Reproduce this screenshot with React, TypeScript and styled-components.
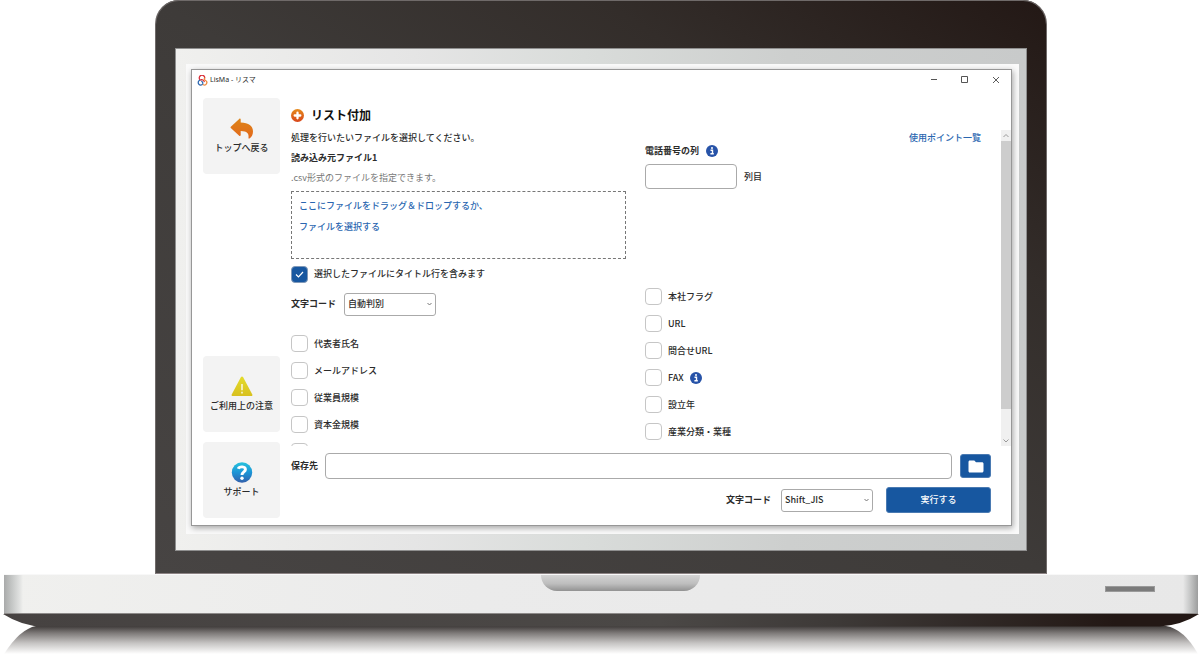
import React from "react";
import styled, { createGlobalStyle, css } from "styled-components";

const GlobalStyle = createGlobalStyle`
  *, *::before, *::after { box-sizing: border-box; }
  body {
    margin: 0;
    background: #fff;
    color: #2b2b2b;
    font: 500 9px/20px "Noto Sans CJK JP", "Noto Sans", sans-serif;
    overflow-x: hidden;
  }
  button, input, select { font: inherit; color: inherit; margin: 0; }
`;

const blue = "#1757a0";
const linkBlue = "#2a66b0";

/* ---------- laptop ---------- */
const Laptop = styled.div`
  display: flex;
  flex-direction: column;
`;
const Lid = styled.div`
  margin: 0 153px 0 155px;
  padding: 48px 19px 22px;
  border: 1px solid #6f6a69;
  border-bottom-color: #8c8384;
  border-top: 0;
  border-radius: 24px 24px 0 0;
  background: linear-gradient(to top right, #474443 0%, #3e3b39 50%, #332d2a 75%, #231815 100%);
  box-shadow: inset 0 1px 0 #6f6a69;
`;
const Screen = styled.div`
  border: 1px solid #8f8f8f;
  padding: 15px 7px 16px 10px;
  background: linear-gradient(to right, #f0f0ee, #e5e5e5 28%, #d9dcda 48%, #cdcfce 72%, #c8caca);
`;
const Glow = styled.div`
  padding: 5px 7px 8px 5px;
  background: #fafafa;
`;
const Base = styled.div`
  display: flex;
  align-items: flex-start;
  height: 40px;
  margin: 0 2px 0 4px;
  border-top: 1px solid #f8f8f8;
  border-bottom: 1px solid #8d8a89;
  background:
    linear-gradient(to right, #a9aaaa, #c5c7c6 8px, #e2e3e2 16px, transparent 19px),
    linear-gradient(to left, #9c9d9d, #c6c7c7 8px, transparent 15px),
    linear-gradient(to right, #f0f0ee, #ebebeb 40%, #e8e8e8);
`;
const Notch = styled.div`
  width: 159px;
  height: 16px;
  margin-left: 45%;
  border-radius: 0 0 18px 18px;
  background: linear-gradient(#d3d3d3, #bdbdbd 55%, #929292);
`;
const Slot = styled.div`
  width: 50px;
  height: 6px;
  margin: 11px 43px 0 auto;
  border: 1px solid #9a9a9a;
  background: #7b7b7b;
`;
const Foot = styled.svg`
  display: block;
  width: 100%;
  height: 42px;
`;

/* ---------- application window ---------- */
const Window = styled.div`
  border: 1px solid #979797;
  background: #fff;
  box-shadow: 1px 2px 6px rgba(0, 0, 0, 0.35);
`;
const TitleBar = styled.header`
  display: flex;
  align-items: center;
  height: 20px;
  padding: 0 11px 0 5px;
  gap: 2px;
`;
const AppName = styled.span`
  font: 400 7px/20px "Noto Sans", "Noto Sans CJK JP", sans-serif;
`;
const WindowButtons = styled.div`
  display: flex;
  gap: 23px;
  margin-left: auto;
`;
const WindowButton = styled.button`
  display: flex;
  padding: 0;
  border: 0;
  background: none;
`;
const Body = styled.div`
  display: flex;
  gap: 11px;
  padding: 8px 0 7px 11px;
`;
const Sidebar = styled.nav`
  display: flex;
  flex-direction: column;
  gap: 10px;
`;
const Tile = styled.button`
  display: flex;
  flex-direction: column;
  align-items: center;
  width: 77px;
  height: 76px;
  padding: 20px 0 0;
  border: 0;
  border-radius: 4px;
  background: #f3f3f3;
  line-height: 16px;
  &:nth-child(2) { margin-top: auto; }
`;
const TileIcon = styled.svg`
  width: 24px;
  height: 22px;
`;
const Main = styled.main`
  flex: 1;
  min-width: 0;
  display: flex;
  flex-direction: column;
`;
const Heading = styled.h1`
  display: flex;
  align-items: center;
  gap: 7px;
  height: 32px;
  margin: 0;
  padding-top: 2px;
  color: #111;
  font-size: 12px;
  font-weight: 700;
`;
const ScrollFrame = styled.div`
  display: flex;
  height: 316px;
`;
const ScrollArea = styled.div`
  flex: 1;
  display: grid;
  grid-template-columns: 335px 1fr;
  column-gap: 19px;
  overflow-y: auto;
  scrollbar-width: none;
`;
const ScrollBar = styled.div`
  display: flex;
  flex-direction: column;
  align-items: center;
  width: 10px;
  background: #f0f0f0;
`;
const ScrollThumb = styled.div`
  width: 10px;
  height: 268px;
  background: #cdcdcd;
`;
const ScrollArrow = styled.svg`
  width: 6px;
  height: 11px;
  &:last-child { margin-top: auto; }
`;
const Column = styled.div`
  display: flex;
  flex-direction: column;
`;
const Intro = styled.div`
  display: flex;
  flex-direction: column;
  gap: 4px;
  margin-bottom: 5px;
`;
const Text = styled.p<{ $tone?: "strong" | "muted" }>`
  margin: 0;
  line-height: 16px;
  ${(p) => p.$tone === "strong" && css`font-weight: 700;`}
  ${(p) => p.$tone === "muted" && css`color: #777; font-weight: 400;`}
`;
const DropZone = styled.label`
  display: block;
  height: 68px;
  padding: 3px 7px;
  border: 1px dashed #777;
  color: ${linkBlue};
  line-height: 21px;
  cursor: pointer;
`;
const HiddenFile = styled.input`
  display: none;
`;
const CheckRow = styled.div`
  display: flex;
  align-items: center;
  height: 27px;
  gap: 6px;
`;
const CheckBox = styled.input`
  appearance: none;
  width: 17px;
  height: 17px;
  border: 1px solid #c6c6c6;
  border-radius: 4px;
  background: #fff;
  &:checked {
    border: 1px solid #8199b8;
    background: ${blue} url("data:image/svg+xml,%3Csvg xmlns='http://www.w3.org/2000/svg' viewBox='0 0 15 15'%3E%3Cpath d='M4 7.5l2.5 2.5 4.5-5' fill='none' stroke='white' stroke-width='1.2'/%3E%3C/svg%3E");
  }
`;
const TitleCheck = styled(CheckRow)`
  height: 30px;
`;
const Field = styled.div`
  display: flex;
  align-items: center;
  gap: 7px;
`;
const EncodingField = styled(Field)`
  height: 30px;
  gap: 8px;
  margin-bottom: 11px;
`;
const FieldLabel = styled.label`
  font-weight: 700;
  white-space: nowrap;
`;
const SelectWrap = styled.div`
  display: grid;
  align-items: center;
`;
const Select = styled.select`
  appearance: none;
  grid-area: 1 / 1;
  width: 92px;
  height: 23px;
  padding: 0 3px;
  border: 1px solid #aaa;
  border-radius: 3px;
  background: #fff;
`;
const Chevron = styled.svg`
  grid-area: 1 / 1;
  justify-self: end;
  width: 5px;
  height: 4px;
  margin-right: 4px;
  pointer-events: none;
`;
const TextInput = styled.input`
  width: 92px;
  height: 25px;
  padding: 0 6px;
  border: 1px solid #aaa;
  border-radius: 4px;
  background: #fff;
`;
const PathInput = styled(TextInput)`
  flex: 1;
  min-width: 0;
  height: 26px;
`;
const PointsLink = styled.a`
  color: ${linkBlue};
  text-decoration: none;
`;
const LinkRow = styled.div`
  display: flex;
  justify-content: flex-end;
  height: 11px;
  padding-right: 20px;
  line-height: 15px;
`;
const PhoneField = styled.div`
  display: flex;
  flex-direction: column;
  gap: 3px;
  height: 142px;
`;
const InfoButton = styled.button`
  display: flex;
  padding: 0;
  border: 0;
  background: none;
`;
const SaveRow = styled(Field)`
  padding: 7px 20px 0 0;
`;
const RunRow = styled(Field)`
  justify-content: flex-end;
  gap: 10px;
  padding: 8px 20px 5px 0;
`;
const PrimaryButton = styled.button<{ $icon?: boolean }>`
  display: flex;
  align-items: center;
  justify-content: center;
  width: ${(p) => (p.$icon ? 31 : 105)}px;
  height: ${(p) => (p.$icon ? 24 : 26)}px;
  margin-left: ${(p) => (p.$icon ? 1 : 3)}px;
  padding: 0;
  border: 1px solid #4a7ab2;
  border-radius: 3px;
  background: ${blue};
  color: #fff;
`;

/* ---------- icons ---------- */
const Logo = () => (
  <svg width="11" height="11" viewBox="0 0 22 22" fill="none" strokeWidth="2.6" strokeLinecap="round">
    <path d="M6.500 10A5.500 5.500 0 1 1 15.500 6" stroke="#d9303a" />
    <path d="M5.500 10.500a5 5 0 1 0 6 7.500Q12.500 15 9.500 12.500" stroke="#2c66b0" />
    <path d="M15 6.500Q14 9.500 17 11a4.800 4.800 0 1 1-4.500 8.500" stroke="#ee8a3c" />
    <path d="M8.500 9.500Q12 9 14.500 13" stroke="#d9303a" />
  </svg>
);
const PlusIcon = () => (
  <svg width="13" height="13" viewBox="0 0 13 13">
    <defs>
      <linearGradient id="plus" x1="0" y1="0" x2="0" y2="1">
        <stop stopColor="#e58a1c" />
        <stop offset="1" stopColor="#d8461b" />
      </linearGradient>
    </defs>
    <circle cx="6.500" cy="6.500" r="6.500" fill="url(#plus)" />
    <path d="M6.500 3.700v5.600M3.700 6.500h5.600" stroke="#fff" strokeWidth="2.300" strokeLinecap="round" />
  </svg>
);
const BackIcon = () => (
  <TileIcon viewBox="0 0 24 22">
    <defs>
      <linearGradient id="back" x1="0" y1="0" x2="0" y2="1">
        <stop stopColor="#dd8418" />
        <stop offset="1" stopColor="#e3681c" />
      </linearGradient>
    </defs>
    <path d="M.8 8.800 9.200 .9c.7-.6 1.500-.3 1.500.6v3.100c8 .2 12.300 3.200 12.300 9 0 3.200-1.400 5.700-3.500 6.900-.7.300-1.200-.1-1-.8.600-3.900-1.300-6.500-7.800-6.600v4c0 .9-.8 1.200-1.500.6L.8 10.100c-.4-.4-.4-.9 0-1.300z" fill="url(#back)" />
  </TileIcon>
);
const WarningIcon = () => (
  <TileIcon viewBox="0 0 24 22">
    <defs>
      <linearGradient id="warn" x1="0" y1="0" x2="0" y2="1">
        <stop stopColor="#e3dc2b" />
        <stop offset="1" stopColor="#d8c01f" />
      </linearGradient>
    </defs>
    <path d="M11 1.100c.5-.8 1.500-.8 2 0l9.300 17.400c.4.800 0 1.500-.9 1.500H2.600c-.9 0-1.300-.7-.9-1.500z" fill="url(#warn)" />
    <path d="M12 8v6.200M12 15.800v1.600" stroke="#fff" strokeWidth="1.300" />
  </TileIcon>
);
const HelpIcon = () => (
  <TileIcon viewBox="0 0 24 22">
    <defs>
      <linearGradient id="help" x1="0" y1="0" x2="0" y2="1">
        <stop stopColor="#27c3dd" />
        <stop offset=".5" stopColor="#1c94d6" />
        <stop offset="1" stopColor="#3260ac" />
      </linearGradient>
    </defs>
    <circle cx="12" cy="10.500" r="10.200" fill="url(#help)" />
    <path d="M8.200 6.800C9.400 4 15.600 4.200 15.400 7.600 15.300 9.900 12 10 12 13" fill="none" stroke="#fff" strokeWidth="2.900" />
    <circle cx="12" cy="16.200" r="1.700" fill="#fff" />
  </TileIcon>
);
const InfoIcon = () => (
  <svg width="12" height="12" viewBox="0 0 12 12">
    <circle cx="6" cy="6" r="6" fill="#2753a8" />
    <path d="M4.500 5.200h2v3.500M4.400 8.800h3.400" stroke="#fff" strokeWidth="1.400" fill="none" />
    <circle cx="6" cy="3.100" r="1" fill="#fff" />
  </svg>
);
const FolderIcon = () => (
  <svg width="16" height="13" viewBox="0 0 16 13">
    <path d="M1.800.5h4.500L8 2.300h6c.8 0 1.500.6 1.500 1.400v7.300c0 .8-.7 1.500-1.500 1.500H1.800C1 12.500.5 11.800.5 11V2C.5 1.100 1 .5 1.800.5z" fill="#fff" />
  </svg>
);
const Down = () => (
  <Chevron viewBox="0 0 5 4">
    <path d="M.5 1l2 2 2-2" fill="none" stroke="#777" />
  </Chevron>
);

const leftItems = ["代表者氏名", "メールアドレス", "従業員規模", "資本金規模"];
const rightItems = ["本社フラグ", "URL", "問合せURL", "FAX", "設立年", "産業分類・業種"];

const Option = ({ id, label }: { id: string; label: string }) => (
  <CheckRow>
    <CheckBox type="checkbox" id={id} />
    <label htmlFor={id}>{label}</label>
    {label === "FAX" && (
      <InfoButton aria-label="FAXについて">
        <InfoIcon />
      </InfoButton>
    )}
  </CheckRow>
);

export default function App() {
  return (
    <Laptop>
      <GlobalStyle />
      <Lid>
        <Screen>
          <Glow>
            <Window>
              <TitleBar>
                <Logo />
                <AppName>LisMa - リスマ</AppName>
                <WindowButtons>
                  <WindowButton aria-label="最小化">
                    <svg width="8" height="8" viewBox="0 0 8 8"><path d="M1 3.500h6" stroke="#555" /></svg>
                  </WindowButton>
                  <WindowButton aria-label="最大化">
                    <svg width="8" height="8" viewBox="0 0 8 8"><path d="M.5 .5h6v6h-6z" fill="none" stroke="#555" /></svg>
                  </WindowButton>
                  <WindowButton aria-label="閉じる">
                    <svg width="8" height="8" viewBox="0 0 8 8"><path d="M1 1l6 6M7 1L1 7" stroke="#333" strokeWidth=".8" /></svg>
                  </WindowButton>
                </WindowButtons>
              </TitleBar>
              <Body>
                <Sidebar>
                  <Tile><BackIcon />トップへ戻る</Tile>
                  <Tile><WarningIcon />ご利用上の注意</Tile>
                  <Tile><HelpIcon />サポート</Tile>
                </Sidebar>
                <Main>
                  <Heading><PlusIcon />リスト付加</Heading>
                  <ScrollFrame>
                    <ScrollArea>
                      <Column>
                        <Intro>
                          <Text>処理を行いたいファイルを選択してください。</Text>
                          <Text $tone="strong">読み込み元ファイル1</Text>
                          <Text $tone="muted">.csv形式のファイルを指定できます。</Text>
                        </Intro>
                        <DropZone>
                          ここにファイルをドラッグ＆ドロップするか、<br />
                          ファイルを選択する
                          <HiddenFile type="file" accept=".csv" />
                        </DropZone>
                        <TitleCheck>
                          <CheckBox type="checkbox" id="title-row" defaultChecked />
                          <label htmlFor="title-row">選択したファイルにタイトル行を含みます</label>
                        </TitleCheck>
                        <EncodingField>
                          <FieldLabel htmlFor="in-code">文字コード</FieldLabel>
                          <SelectWrap>
                            <Select id="in-code"><option>自動判別</option></Select>
                            <Down />
                          </SelectWrap>
                        </EncodingField>
                        {leftItems.map((t, i) => <Option key={t} id={`left-${i}`} label={t} />)}
                        <CheckRow>
                          <CheckBox type="checkbox" aria-label="売上規模" />
                        </CheckRow>
                      </Column>
                      <Column>
                        <LinkRow><PointsLink href="#points">使用ポイント一覧</PointsLink></LinkRow>
                        <PhoneField>
                          <Field>
                            <FieldLabel htmlFor="phone">電話番号の列</FieldLabel>
                            <InfoButton aria-label="電話番号の列について"><InfoIcon /></InfoButton>
                          </Field>
                          <Field>
                            <TextInput id="phone" />
                            <span>列目</span>
                          </Field>
                        </PhoneField>
                        {rightItems.map((t, i) => <Option key={t} id={`right-${i}`} label={t} />)}
                      </Column>
                    </ScrollArea>
                    <ScrollBar>
                      <ScrollArrow viewBox="0 0 6 11"><path d="M.5 7L3 4.500 5.500 7" fill="none" stroke="#999" /></ScrollArrow>
                      <ScrollThumb />
                      <ScrollArrow viewBox="0 0 6 11"><path d="M.5 4.500L3 7l2.500-2.500" fill="none" stroke="#999" /></ScrollArrow>
                    </ScrollBar>
                  </ScrollFrame>
                  <SaveRow>
                    <FieldLabel htmlFor="path">保存先</FieldLabel>
                    <PathInput id="path" />
                    <PrimaryButton $icon aria-label="フォルダを選択"><FolderIcon /></PrimaryButton>
                  </SaveRow>
                  <RunRow>
                    <FieldLabel htmlFor="out-code">文字コード</FieldLabel>
                    <SelectWrap>
                      <Select id="out-code"><option>Shift_JIS</option></Select>
                      <Down />
                    </SelectWrap>
                    <PrimaryButton>実行する</PrimaryButton>
                  </RunRow>
                </Main>
              </Body>
            </Window>
          </Glow>
        </Screen>
      </Lid>
      <Base>
        <Notch />
        <Slot />
      </Base>
      <Foot viewBox="0 0 1200 42" preserveAspectRatio="none">
        <defs>
          <linearGradient id="foot" x1="0" x2="1" y1="0" y2="0">
            <stop stopColor="#464241" />
            <stop offset=".55" stopColor="#4b4846" />
            <stop offset=".7" stopColor="#3d3937" />
            <stop offset=".93" stopColor="#231815" />
          </linearGradient>
          <linearGradient id="shade" x1="0" x2="0" y1="0" y2="1">
            <stop stopColor="#3e3a39" />
            <stop offset=".25" stopColor="#7d7978" />
            <stop offset=".6" stopColor="#c4c2c1" />
            <stop offset="1" stopColor="#fff" />
          </linearGradient>
        </defs>
        <path d="M36 12H1166Q1184 15 1198 40H4Q20 15 36 12z" fill="url(#shade)" />
        <path d="M3 0H1199Q1182 11 1160 12.500H42Q22 12 3 0z" fill="url(#foot)" />
      </Foot>
    </Laptop>
  );
}
